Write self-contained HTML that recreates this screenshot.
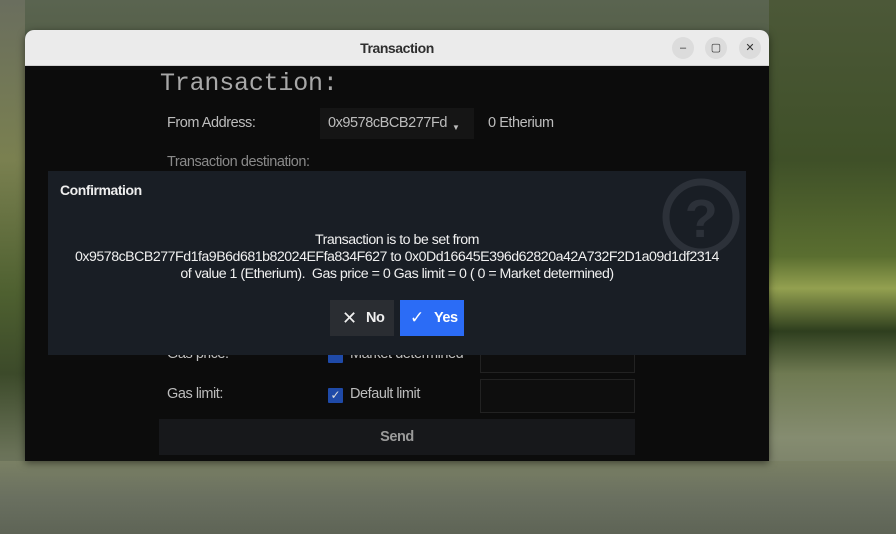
<!DOCTYPE html>
<html><head><style>
*{margin:0;padding:0;box-sizing:border-box}
body{width:896px;height:534px;overflow:hidden;position:relative;font-family:"Liberation Sans",sans-serif;letter-spacing:-0.45px;
background:linear-gradient(180deg,#5a6450 0%,#4e5a3e 20%,#56663a 45%,#5e6a48 60%,#6f7466 75%,#5d6258 100%);}
.bgr{position:absolute;left:769px;top:0;width:127px;height:534px;background:linear-gradient(180deg,#4c5838 0%,#3f5028 30%,#5a6e30 48%,#93a050 54%,#2e3e1e 62%,#6f7a52 70%,#858c70 82%,#6a6e5e 100%)}
.bgl{position:absolute;left:0;top:0;width:25px;height:534px;background:linear-gradient(180deg,#6a6e5e 0%,#7a8050 30%,#4e6030 55%,#3c4a2a 70%,#6a7258 85%,#7a7e70 100%)}
.bgb{position:absolute;left:0;top:461px;width:896px;height:73px;background:linear-gradient(180deg,#7a8064,#6a7060 50%,#5e6456)}
.win{position:absolute;left:25px;top:30px;width:744px;height:431px;background:#0c0c0c;border-radius:9px 9px 0 0;overflow:hidden;box-shadow:0 2px 8px rgba(0,0,0,.5)}
.tb{height:36px;background:#ebebeb;border-bottom:1px solid #d0d0d0;text-align:center;font-weight:bold;font-size:14px;line-height:36px;color:#2e2e2e}
.wb{position:absolute;top:7px;width:22px;height:22px;border-radius:50%;background:#dcdcdc;color:#333;font-size:11px;line-height:22px;text-align:center;letter-spacing:0}
.t{position:absolute;color:#bdbdbd;font-size:14.5px;line-height:17px}
.dlg{position:absolute;left:48px;top:171px;width:698px;height:184px;background:#191e25}
.cb{position:absolute;width:15px;height:15px;background:#1f4aa8;border-radius:1px;color:#ddd;font-size:12px;line-height:15px;text-align:center;letter-spacing:0}
</style></head><body>
<div class="bgl"></div><div class="bgr"></div><div class="bgb"></div>
<div class="win">
<div class="tb">Transaction</div>
<div class="wb" style="left:647px">–</div>
<div class="wb" style="left:680px">▢</div>
<div class="wb" style="left:714px">✕</div>
</div>
<div class="t" style="left:160px;top:70px;font:25px/28px 'Liberation Mono',monospace;letter-spacing:-0.2px;color:#a8a8a8">Transaction:</div>
<div class="t" style="left:167px;top:115px">From Address:</div>
<div style="position:absolute;left:320px;top:108px;width:154px;height:31px;background:#151515"></div>
<div class="t" style="left:328px;top:115px">0x9578cBCB277Fd</div>
<div class="t" style="left:452px;top:119px;font-size:8px">▼</div>
<div class="t" style="left:488px;top:115px">0 Etherium</div>
<div class="t" style="left:167px;top:154px;color:#8a8a8a">Transaction destination:</div>
<div style="position:absolute;left:480px;top:340px;width:155px;height:33px;border:1px solid #222;background:#0e0e0e"></div>
<div style="position:absolute;left:480px;top:379px;width:155px;height:34px;border:1px solid #222;background:#0e0e0e"></div>
<div class="t" style="left:167px;top:386px">Gas limit:</div>
<div class="cb" style="left:328px;top:388px">✓</div>
<div class="t" style="left:350px;top:386px">Default limit</div>
<div class="t" style="left:167px;top:346px">Gas price:</div>
<div class="cb" style="left:328px;top:348px"></div>
<div class="t" style="left:350px;top:346px">Market determined</div>
<div style="position:absolute;left:159px;top:419px;width:476px;height:36px;background:#17181b;color:#9a9a9a;text-align:center;line-height:36px;font-weight:bold;font-size:14.5px">Send</div>
<div class="dlg">
<div style="position:absolute;left:12px;top:11px;color:#eee;font-weight:bold;font-size:14px">Confirmation</div>
<svg style="position:absolute;left:613px;top:6px" width="80" height="80" viewBox="0 0 80 80"><circle cx="40" cy="40" r="35" fill="none" stroke="#2c3139" stroke-width="7"/><text x="40" y="60" text-anchor="middle" font-family="Liberation Sans" font-weight="bold" font-size="54" fill="#2c3139">?</text></svg>
<div style="position:absolute;left:0;top:61px;width:698px;text-align:center;color:#f0f0f0;font-size:14.2px;letter-spacing:-0.5px;line-height:17px;white-space:nowrap">Transaction is to be set from<br>0x9578cBCB277Fd1fa9B6d681b82024EFfa834F627 to 0x0Dd16645E396d62820a42A732F2D1a09d1df2314<br>of value 1 (Etherium).&nbsp; Gas price = 0 Gas limit = 0 ( 0 = Market determined)</div>
<div style="position:absolute;left:282px;top:129px;width:64px;height:36px;background:#2a2d32;color:#f0f0f0;font-weight:bold;font-size:14.5px;line-height:36px"><span style="position:absolute;left:12px;font-weight:normal;font-size:18px">✕</span><span style="position:absolute;left:36px">No</span></div>
<div style="position:absolute;left:352px;top:129px;width:64px;height:36px;background:#2b6cf6;color:#fff;font-weight:bold;font-size:14.5px;line-height:36px"><span style="position:absolute;left:10px;font-weight:normal;font-size:17px">✓</span><span style="position:absolute;left:34px">Yes</span></div>
</div>
</body></html>
